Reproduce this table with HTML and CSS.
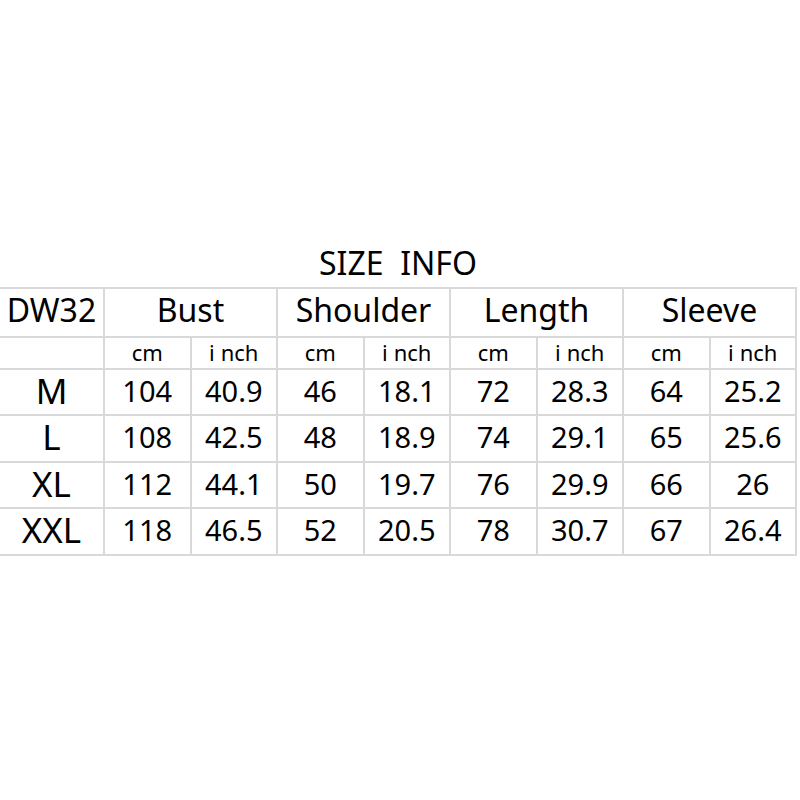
FILE: index.html
```html
<!DOCTYPE html>
<html>
<head>
<meta charset="utf-8">
<link rel="stylesheet" href="styles.css">
</head>
<body>
<table class="size-table">
  <colgroup>
    <col class="c-first">
    <col class="c"><col class="c"><col class="c"><col class="c">
    <col class="c"><col class="c"><col class="c"><col class="c">
  </colgroup>
  <tr class="title-row"><td colspan="9" class="title">SIZE  INFO</td></tr>
  <tr class="head-row">
    <td class="model">DW32</td>
    <td colspan="2">Bust</td>
    <td colspan="2">Shoulder</td>
    <td colspan="2">Length</td>
    <td colspan="2">Sleeve</td>
  </tr>
  <tr class="unit-row">
    <td></td>
    <td>cm</td><td><span class="i">i</span>nch</td>
    <td>cm</td><td><span class="i">i</span>nch</td>
    <td>cm</td><td><span class="i">i</span>nch</td>
    <td>cm</td><td><span class="i">i</span>nch</td>
  </tr>
  <tr class="data-row">
    <td class="size">M</td><td>104</td><td>40.9</td><td>46</td><td>18.1</td><td>72</td><td>28.3</td><td>64</td><td>25.2</td>
  </tr>
  <tr class="data-row">
    <td class="size">L</td><td>108</td><td>42.5</td><td>48</td><td>18.9</td><td>74</td><td>29.1</td><td>65</td><td>25.6</td>
  </tr>
  <tr class="data-row">
    <td class="size">XL</td><td>112</td><td>44.1</td><td>50</td><td>19.7</td><td>76</td><td>29.9</td><td>66</td><td>26</td>
  </tr>
  <tr class="data-row last">
    <td class="size">XXL</td><td>118</td><td>46.5</td><td>52</td><td>20.5</td><td>78</td><td>30.7</td><td>67</td><td>26.4</td>
  </tr>
</table>
</body>
</html>
```

FILE: styles.css
```css
html, body {
  margin: 0;
  padding: 0;
  background: #ffffff;
}

body {
  font-family: "Noto Sans", "Open Sans", sans-serif;
  color: #000000;
}

.size-table {
  margin-top: 241px;
  width: 797px;
  border-collapse: collapse;
  table-layout: fixed;
}

.c-first { width: 104px; }

.size-table td {
  border: 2px solid #d9d9d9;
  padding: 0 0 3px 0;
  text-align: center;
  vertical-align: middle;
  font-size: 29px;
  line-height: 1;
  white-space: nowrap;
}

.size-table tr > td:first-child { border-left: none; }

.size-table .title {
  border: none;
  border-bottom: 2px solid #d9d9d9;
  font-size: 32px;
  height: 44px;
  white-space: pre;
  padding-bottom: 2px;
}

.head-row td {
  font-size: 32px;
  height: 41.5px;
  padding-bottom: 5px;
}

.unit-row td {
  font-size: 22px;
  height: 28px;
  padding-bottom: 2px;
}

.unit-row .i { margin-right: 6px; }

.data-row td { height: 41.5px; }

.size-table .size { font-size: 35px; }
```
